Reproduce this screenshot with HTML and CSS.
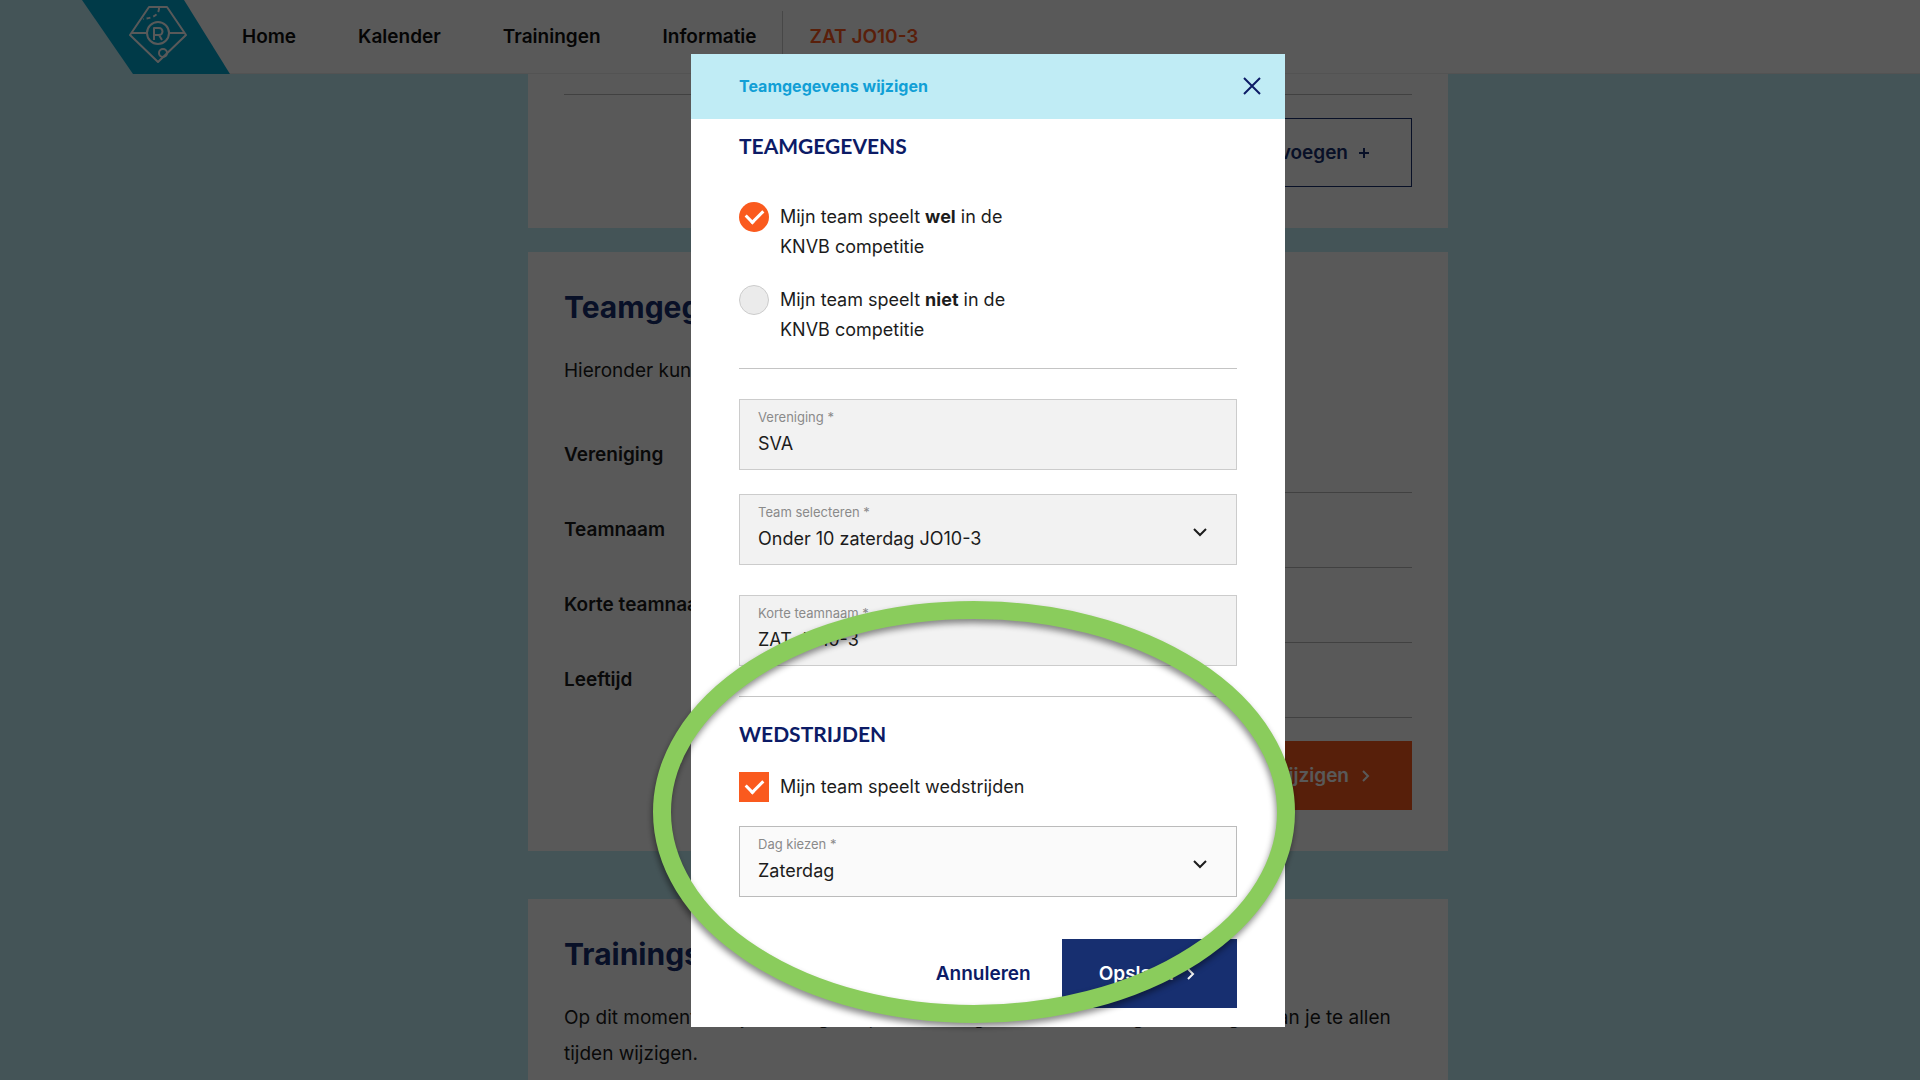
FILE: index.html
```html
<!DOCTYPE html>
<html lang="nl">
<head>
    <meta charset="UTF-8">
    <title>Teamgegevens wijzigen</title>
    <link rel="stylesheet" href="styles.css">
</head>
<body>
    <header class="site-header">
        <a class="logo" href="#" aria-label="Home">
            <svg width="148" height="74" viewBox="0 0 148 74">
                <polygon points="0,0 102,0 148,74 51,74" fill="#00a6cf"/>
                <g class="logo-lines">
                    <path d="M67 7h18l19 28-28 27-28-27z"/>
                    <path d="M49 33h16M87 33h16"/>
                    <circle cx="76" cy="33" r="11"/>
                    <path d="M72 40V28h5a3 3 0 0 1 0 7h-5M77 35l3 5"/>
                    <path d="M77 8c0 7-6 10-16 11" stroke-dasharray="4 3"/>
                    <circle cx="81" cy="53" r="4"/>
                </g>
            </svg>
        </a>
        <nav class="nav">
            <a href="#">Home</a>
            <a href="#">Kalender</a>
            <a href="#">Trainingen</a>
            <a href="#">Informatie</a>
            <a class="nav-team" href="#">ZAT JO10-3</a>
        </nav>
    </header>

    <main class="page">
        <section class="card">
            <div class="row-end"></div>
            <button class="btn btn-outline">Toevoegen
                <svg class="icon" width="12" height="12" viewBox="0 0 12 12"><path d="M6 1v10M1 6h10"/></svg>
            </button>
        </section>

        <section class="card">
            <h2>Teamgegevens</h2>
            <p>Hieronder kun je de teamgegevens bekijken.</p>
            <dl class="details">
                <div><dt>Vereniging</dt><dd>SVA</dd></div>
                <div><dt>Teamnaam</dt><dd>JO10-3</dd></div>
                <div><dt>Korte teamnaam</dt><dd>ZAT JO10-3</dd></div>
                <div><dt>Leeftijd</dt><dd>Onder 10</dd></div>
            </dl>
            <button class="btn btn-orange">Wijzigen
                <svg class="icon" width="12" height="12" viewBox="0 0 12 12"><path d="M4 1l5 5-5 5"/></svg>
            </button>
        </section>

        <section class="card card-last">
            <h2>Trainingsdagen</h2>
            <p>Op dit moment heb je trainingen op de dinsdag en de donderdag. Deze dagen kan je te allen tijden wijzigen.</p>
        </section>
    </main>

    <div class="overlay">
        <form class="modal">
            <header class="modal-header">
                <h1>Teamgegevens wijzigen</h1>
                <button class="close" type="button" aria-label="Sluiten">
                    <svg class="icon" width="18" height="18" viewBox="0 0 18 18"><path d="M1 1l16 16M17 1L1 17"/></svg>
                </button>
            </header>
            <div class="modal-body">
                <h3>TEAMGEGEVENS</h3>
                <div class="choices">
                    <label class="choice" for="wel">
                        <input type="radio" id="wel" name="knvb" checked>
                        <span>Mijn team speelt <b>wel</b> in de KNVB competitie</span>
                    </label>
                    <label class="choice" for="niet">
                        <input type="radio" id="niet" name="knvb">
                        <span>Mijn team speelt <b>niet</b> in de KNVB competitie</span>
                    </label>
                </div>
                <hr>
                <div class="fields">
                    <div class="field">
                        <label for="vereniging">Vereniging *</label>
                        <input type="text" id="vereniging" value="SVA">
                    </div>
                    <div class="field">
                        <label for="team">Team selecteren *</label>
                        <select id="team"><option>Onder 10 zaterdag JO10-3</option></select>
                        <svg class="icon chevron" width="16" height="10" viewBox="0 0 16 10"><path d="M2 2l6 6 6-6"/></svg>
                    </div>
                    <div class="field field-short">
                        <label for="korte">Korte teamnaam *</label>
                        <input type="text" id="korte" value="ZAT JO10-3">
                    </div>
                </div>
                <hr>
                <h3>WEDSTRIJDEN</h3>
                <label class="choice choice-wide" for="wedstrijden">
                    <input type="checkbox" id="wedstrijden" checked>
                    <span>Mijn team speelt wedstrijden</span>
                </label>
                <div class="field field-active">
                    <label for="dag">Dag kiezen *</label>
                    <select id="dag"><option>Zaterdag</option></select>
                    <svg class="icon chevron" width="16" height="10" viewBox="0 0 16 10"><path d="M2 2l6 6 6-6"/></svg>
                </div>
                <div class="actions">
                    <button class="btn btn-text" type="button">Annuleren</button>
                    <button class="btn btn-navy" type="submit">Opslaan
                        <svg class="icon" width="12" height="12" viewBox="0 0 12 12"><path d="M4 1l5 5-5 5"/></svg>
                    </button>
                </div>
            </div>
            <svg class="highlight" width="642" height="422" viewBox="0 0 642 422">
                <ellipse cx="321" cy="211" rx="312" ry="202"/>
            </svg>
        </form>
    </div>
</body>
</html>
```
FILE: styles.css
```css
* { box-sizing: border-box; }
body { margin: 0; height: 100vh; overflow: hidden; background: #c3f0f8; color: #1c1c1c; font-family: Inter, "Liberation Sans", sans-serif; font-size: 18px; }
h1, h2, h3, p, dl, dd { margin: 0; }
button, input, select { font: inherit; color: inherit; }
.icon { flex: none; fill: none; stroke: currentColor; stroke-width: 2; }

/* header */
.site-header { display: flex; height: 74px; margin-left: 82px; background: linear-gradient(90deg, transparent 75px, #fff 75px); }
.logo { display: block; height: 74px; }
.logo-lines { fill: none; stroke: #fff; stroke-width: 2; stroke-linejoin: round; }
.nav { display: flex; flex: 1; align-items: center; border-bottom: 1px solid #eee; padding-left: 12px; }
.nav a { margin-right: 62px; color: #111; font-size: 19px; font-weight: 600; text-decoration: none; }
.nav a:nth-child(4) { margin-right: 25px; }
.nav .nav-team { display: flex; align-items: center; height: 52px; padding-left: 27px; border-left: 1px solid #ccc; color: #ff5a1f; }

/* page */
.page { max-width: 920px; margin: 0 auto; padding-left: 56px; box-sizing: content-box; }
.card { display: flow-root; padding: 0 36px 41px; background: #fff; margin-bottom: 24px; }
.card h2 { padding-top: 34px; color: #172f70; font-size: 30px; line-height: 42px; }
.card p { margin-top: 25px; font-size: 19px; line-height: 36px; }
.row-end { height: 21px; border-bottom: 1px solid #bbb; }
.details { margin-top: 29px; }
.details div { display: flex; line-height: 74px; }
.details dt { width: 240px; font-size: 19px; font-weight: 600; }
.details dd { flex: 1; border-bottom: 1px solid #bbb; }
.card-last { margin-top: 48px; padding-bottom: 80px; }

/* buttons */
.btn { display: flex; align-items: center; gap: 10px; height: 69px; padding: 0 41px 0 37px; border: 0; font-size: 19px; font-weight: 600; cursor: pointer; }
.card .btn { margin: 23px 0 0 auto; }
.btn-outline { border: 1px solid #172f70; background: none; color: #172f70; }
.btn-orange { background: #fa5a1e; color: #fff; }
.btn-navy { background: #172f70; color: #fff; }
.btn-text { padding: 0; background: none; color: #0c1b66; }

/* modal */
.overlay { position: fixed; inset: 0; padding: 54px 0 0 56px; background: rgba(0, 0, 0, 0.65); }
.modal { position: relative; width: 594px; margin: 0 auto; background: #fff; }
.modal-header { display: flex; align-items: center; justify-content: space-between; height: 65px; padding: 0 24px 2px 48px; background: #c0ecf5; }
.modal-header h1 { color: #119fd6; font-size: 16px; }
.close { display: flex; padding: 0; border: 0; background: none; color: #0c1b66; cursor: pointer; }
.modal-body { padding: 12px 48px 19px; }
.modal h3 { color: #0c1b66; font-family: Lato, sans-serif; font-size: 21px; line-height: 30px; }
hr { height: 1px; margin: 0; border: 0; background: #c4c4c4; }
.choices { display: grid; gap: 23px; padding: 41px 0 23px; }
.choice { display: flex; gap: 11px; max-width: 290px; line-height: 30px; }
.choice input { flex: none; width: 30px; height: 30px; margin: 0; appearance: none; border: 1px solid #ccc; background: #ebebeb; }
.choice input[type="radio"] { border-radius: 50%; }
.choice input:checked { display: grid; place-items: center; border: 0; background: #fa5a1e; }
.choice input:checked::after { content: ""; width: 14px; height: 8px; margin-bottom: 5px; border: solid #fff; border-width: 0 0 3px 3px; rotate: -45deg; }
.choice-wide { max-width: none; margin: 23px 0 24px; }
.fields { display: grid; gap: 24px; padding: 30px 0; }
.field { position: relative; height: 71px; border: 1px solid #ccc; background: #f2f2f2; }
.field-short { margin-top: 6px; }
.field-active { border-color: #bbb; background: #fafafa; }
.field label { display: block; padding: 9px 18px 0; color: #8a8a8a; font-size: 13px; line-height: 16px; }
.field input, .field select { display: block; width: 100%; height: 37px; padding: 0 18px; appearance: none; border: 0; background: none; outline: 0; }
.chevron { position: absolute; top: 32px; right: 28px; pointer-events: none; }
.actions { display: flex; justify-content: flex-end; gap: 31px; margin-top: 42px; }
hr + h3 { margin-top: 22px; }

/* ring around the match settings */
.highlight { position: absolute; top: 547px; left: -38px; overflow: visible; pointer-events: none; filter: drop-shadow(-1px 4px 3px rgba(0, 0, 0, 0.45)); }
.highlight ellipse { fill: none; stroke: #8acc5c; stroke-width: 18; }
```
